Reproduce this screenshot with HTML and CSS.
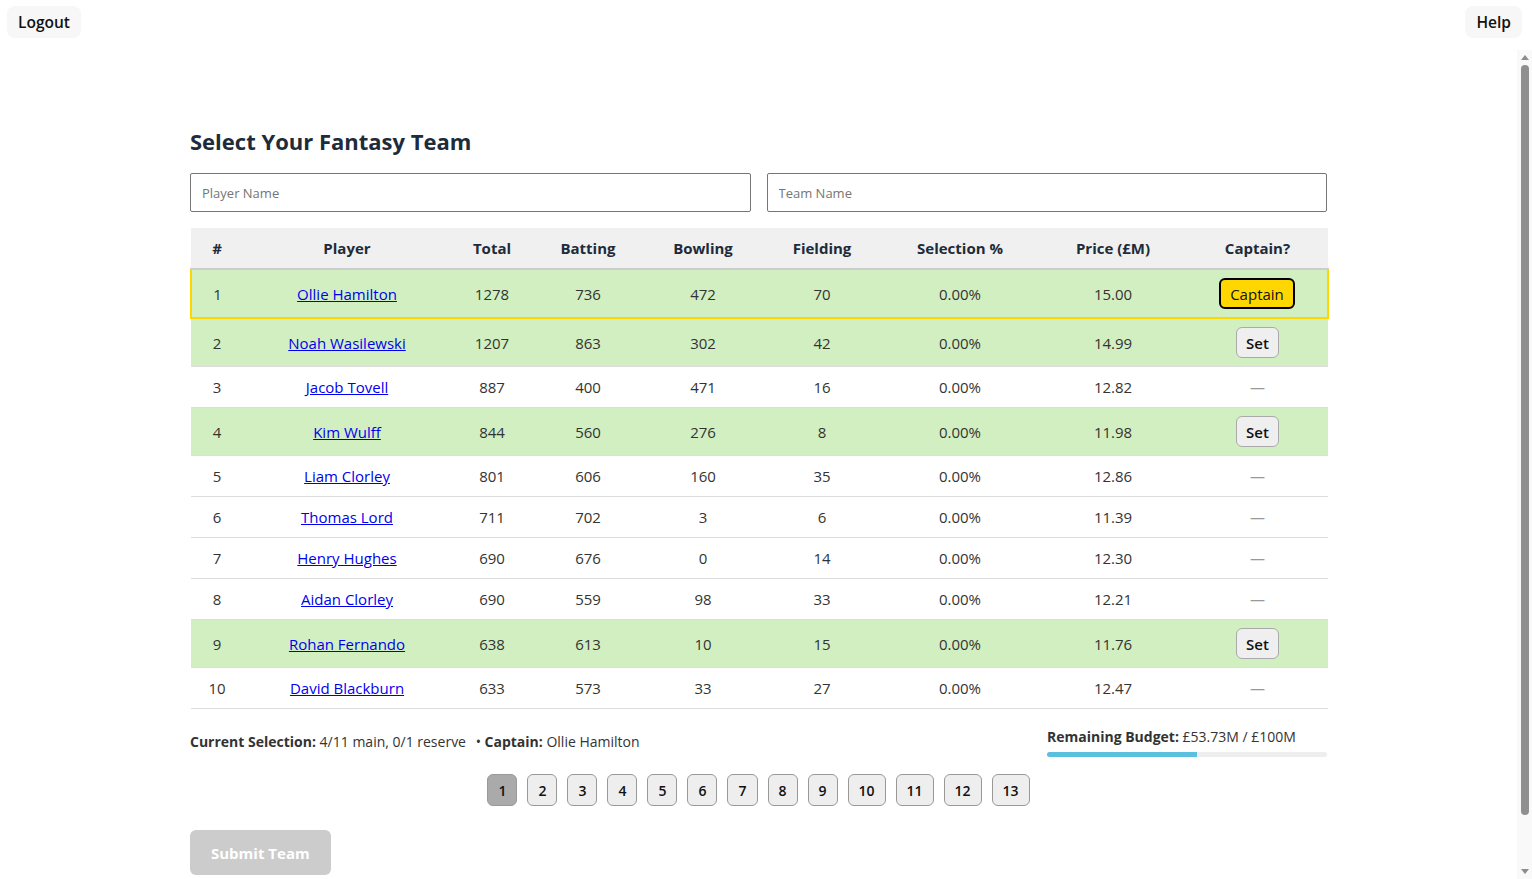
FILE: index.html
```html
<!DOCTYPE html>
<html lang="en">
<head>
<meta charset="utf-8">
<title>Select Your Fantasy Team</title>
<link rel="stylesheet" href="styles.css">
</head>
<body>
<header class="topbar">
  <button class="top-btn">Logout</button>
  <button class="top-btn">Help</button>
</header>
<div class="view">
  <div class="scroller">
    <main class="container">
      <h2 class="title">Select Your Fantasy Team</h2>
      <div class="filters">
        <input class="field" type="text" placeholder="Player Name">
        <input class="field" type="text" placeholder="Team Name">
      </div>
      <table class="players">
        <colgroup>
          <col class="c-num"><col class="c-player"><col class="c-total"><col class="c-bat"><col class="c-bowl"><col class="c-field"><col class="c-sel"><col class="c-price"><col class="c-cap">
        </colgroup>
        <thead>
          <tr><th>#</th><th>Player</th><th>Total</th><th>Batting</th><th>Bowling</th><th>Fielding</th><th>Selection %</th><th>Price (£M)</th><th>Captain?</th></tr>
        </thead>
        <tbody>
          <tr class="picked captain"><td>1</td><td><a href="#">Ollie Hamilton</a></td><td>1278</td><td>736</td><td>472</td><td>70</td><td>0.00%</td><td>15.00</td><td><button class="cap-btn active">Captain</button></td></tr>
          <tr class="picked"><td>2</td><td><a href="#">Noah Wasilewski</a></td><td>1207</td><td>863</td><td>302</td><td>42</td><td>0.00%</td><td>14.99</td><td><button class="cap-btn">Set</button></td></tr>
          <tr><td>3</td><td><a href="#">Jacob Tovell</a></td><td>887</td><td>400</td><td>471</td><td>16</td><td>0.00%</td><td>12.82</td><td><span class="dash">—</span></td></tr>
          <tr class="picked"><td>4</td><td><a href="#">Kim Wulff</a></td><td>844</td><td>560</td><td>276</td><td>8</td><td>0.00%</td><td>11.98</td><td><button class="cap-btn">Set</button></td></tr>
          <tr><td>5</td><td><a href="#">Liam Clorley</a></td><td>801</td><td>606</td><td>160</td><td>35</td><td>0.00%</td><td>12.86</td><td><span class="dash">—</span></td></tr>
          <tr><td>6</td><td><a href="#">Thomas Lord</a></td><td>711</td><td>702</td><td>3</td><td>6</td><td>0.00%</td><td>11.39</td><td><span class="dash">—</span></td></tr>
          <tr><td>7</td><td><a href="#">Henry Hughes</a></td><td>690</td><td>676</td><td>0</td><td>14</td><td>0.00%</td><td>12.30</td><td><span class="dash">—</span></td></tr>
          <tr><td>8</td><td><a href="#">Aidan Clorley</a></td><td>690</td><td>559</td><td>98</td><td>33</td><td>0.00%</td><td>12.21</td><td><span class="dash">—</span></td></tr>
          <tr class="picked"><td>9</td><td><a href="#">Rohan Fernando</a></td><td>638</td><td>613</td><td>10</td><td>15</td><td>0.00%</td><td>11.76</td><td><button class="cap-btn">Set</button></td></tr>
          <tr><td>10</td><td><a href="#">David Blackburn</a></td><td>633</td><td>573</td><td>33</td><td>27</td><td>0.00%</td><td>12.47</td><td><span class="dash">—</span></td></tr>
        </tbody>
      </table>
      <div class="summary">
        <div class="selection"><strong>Current Selection:</strong> 4/11 main, 0/1 reserve <span class="sep">•</span> <strong>Captain:</strong> Ollie Hamilton</div>
        <div class="budget">
          <div class="budget-label"><strong>Remaining Budget:</strong> £53.73M / £100M</div>
          <div class="bar"><div class="bar-fill" style="width: 53.73%"></div></div>
        </div>
      </div>
      <nav class="pager">
        <button class="page current">1</button>
        <button class="page">2</button>
        <button class="page">3</button>
        <button class="page">4</button>
        <button class="page">5</button>
        <button class="page">6</button>
        <button class="page">7</button>
        <button class="page">8</button>
        <button class="page">9</button>
        <button class="page">10</button>
        <button class="page">11</button>
        <button class="page">12</button>
        <button class="page">13</button>
      </nav>
      <button class="submit" disabled>Submit Team</button>
    </main>
  </div>
  <div class="vscroll" aria-hidden="true">
    <div class="vs-arrow"><span class="tri-up"></span></div>
    <div class="vs-track"><div class="vs-thumb"></div></div>
    <div class="vs-arrow"><span class="tri-down"></span></div>
  </div>
</div>
</body>
</html>
```
FILE: styles.css
```css
* { box-sizing: border-box; }
html, body { margin: 0; height: 100%; overflow: hidden; }
body {
  font-family: "Open Sans", "Noto Sans", "Liberation Sans", sans-serif;
  color: #333;
  background: #fff;
  display: flex;
  flex-direction: column;
}
.topbar {
  height: 50px;
  flex: none;
  display: flex;
  justify-content: space-between;
  align-items: flex-start;
  padding: 6px 10px 0 7px;
}
.top-btn {
  font-family: inherit;
  font-size: 15.5px;
  font-weight: 600;
  color: #111;
  background: #f7f7f7;
  border: none;
  border-radius: 8px;
  height: 32px;
  padding: 0 11px;
}
.view {
  flex: 1;
  min-height: 0;
  display: flex;
}
.scroller {
  flex: 1;
  min-width: 0;
  overflow: hidden;
}
.vscroll {
  width: 15px;
  flex: none;
  background: #f9f9f9;
  display: flex;
  flex-direction: column;
}
.vs-arrow {
  height: 15px;
  display: flex;
  align-items: center;
  justify-content: center;
  padding-left: 1px;
}
.tri-up, .tri-down {
  width: 0;
  height: 0;
  border-left: 4px solid transparent;
  border-right: 4px solid transparent;
}
.tri-up { border-bottom: 5px solid #8c8c8c; }
.tri-down { border-top: 5px solid #8c8c8c; }
.vs-track {
  flex: 1;
  padding: 0 3px 0 4px;
}
.vs-thumb {
  height: 750px;
  background: #8f8f8f;
  border-radius: 4px;
}
.container {
  width: 1137px;
  margin: 0 auto;
  padding: 77px 0 57px;
}
.title {
  margin: 0 0 17px;
  font-size: 22px;
  line-height: 29px;
  font-weight: 700;
  color: #1e2b3a;
}
.filters {
  display: flex;
  gap: 16px;
  margin-bottom: 16px;
}
.field {
  flex: 1;
  height: 39px;
  border: 1px solid #767676;
  border-radius: 2px;
  padding: 0 11px;
  font-family: inherit;
  font-size: 13px;
  color: #333;
}
.field::placeholder { color: #757575; }
.players {
  width: 100%;
  border-collapse: collapse;
  table-layout: fixed;
  font-size: 15px;
}
.c-num { width: 52px; }
.c-player { width: 208px; }
.c-total { width: 82px; }
.c-bat { width: 110px; }
.c-bowl { width: 120px; }
.c-field { width: 118px; }
.c-sel { width: 158px; }
.c-price { width: 148px; }
.c-cap { width: 141px; }
.players th {
  background: #f0f0f0;
  color: #1e2b3a;
  font-weight: 700;
  padding: 8px 4px;
  line-height: 24px;
  border-bottom: 2px solid #cccccc;
  text-align: center;
}
.players td {
  padding: 8px 4px;
  line-height: 24px;
  text-align: center;
  border-bottom: 1px solid #dddddd;
  color: #333;
}
.players tr.picked td { background: #d2efc2; }
.players tr.captain { border: 2px solid #ffd700; }
.players a { color: #0000ee; text-decoration: underline; }
.cap-btn {
  font-family: inherit;
  font-size: 15px;
  font-weight: 600;
  color: #111;
  background: #efefef;
  border: 1px solid #aaaaaa;
  border-radius: 6px;
  height: 31px;
  padding: 0 9px;
  vertical-align: middle;
}
.cap-btn.active {
  background: #ffd700;
  border: 2px solid #000;
  padding: 0 9px;
  font-weight: 500;
}
.dash { color: #999; }
.summary {
  display: flex;
  justify-content: space-between;
  align-items: center;
  margin-top: 19px;
  font-size: 14px;
  color: #333;
}
.selection strong, .budget-label strong { color: #333; font-weight: 700; }
.selection { margin-top: -3px; }
.sep { margin-left: 6px; }
.budget { width: 280px; }
.budget-label { margin-bottom: 6px; line-height: 18px; }
.bar {
  height: 5px;
  background: #eeeeee;
  border-radius: 3px;
  overflow: hidden;
}
.bar-fill { height: 100%; background: #5bc0de; }
.pager {
  display: flex;
  justify-content: center;
  gap: 10px;
  margin-top: 17px;
}
.page {
  font-family: inherit;
  font-size: 14px;
  font-weight: 600;
  color: #111;
  background: #eeeeee;
  border: 1px solid #999;
  border-radius: 6px;
  height: 32px;
  min-width: 29px;
  padding: 0 10px;
}
.page.current { background: #aaaaaa; }
.submit {
  margin-top: 24px;
  font-family: inherit;
  font-size: 15px;
  font-weight: 700;
  color: #fff;
  background: #cccccc;
  border: none;
  border-radius: 6px;
  height: 45px;
  padding: 0 21px;
}
```
